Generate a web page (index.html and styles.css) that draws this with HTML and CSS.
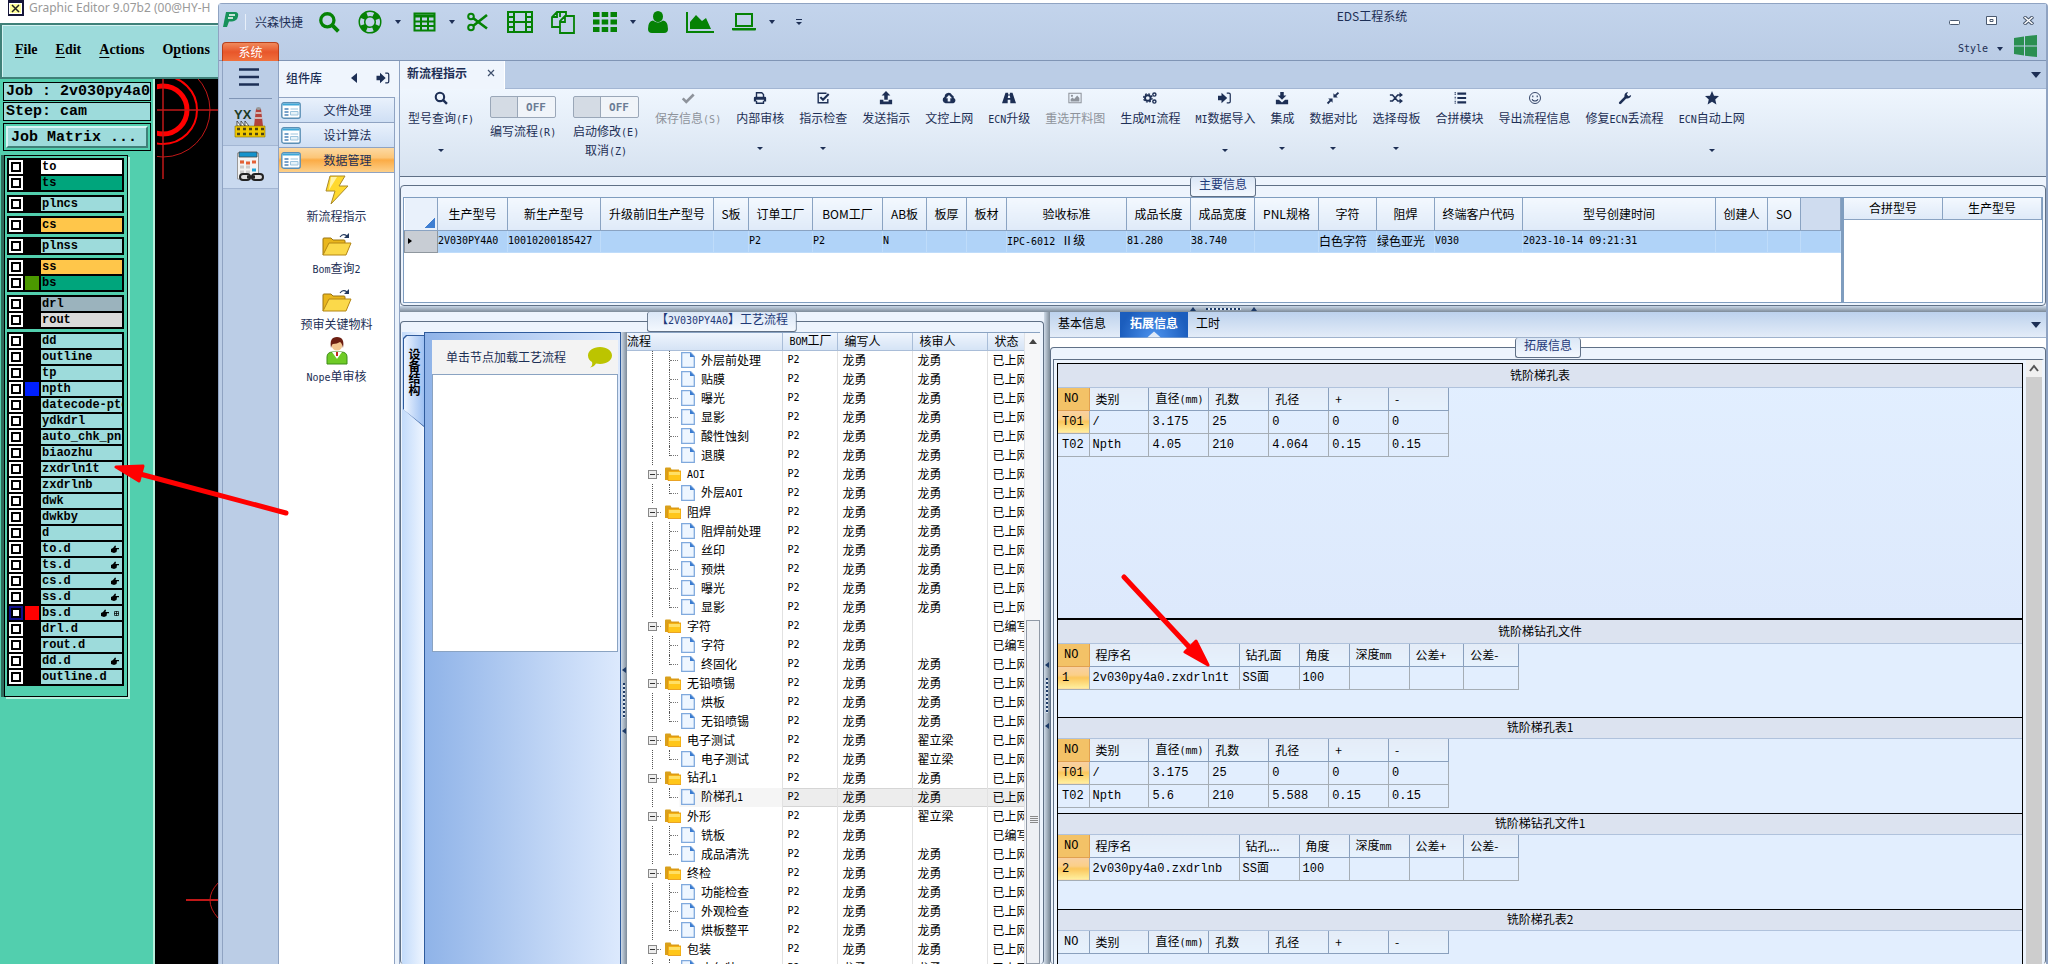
FILE: index.html
```html
<!DOCTYPE html>
<html lang="zh-CN">

<head>
	<meta charset="UTF-8" />
	<meta name="viewport" content="width=device-width, initial-scale=1.0" />
	<title>EDS工程系统</title>
	<link rel="stylesheet" href="styles.css">
	<script src="script.js" defer></script>
</head>

<body>
	<svg class="sprite" aria-hidden="true">
		<symbol id="i-search" viewBox="0 0 16 16"><circle cx="6.8" cy="6.8" r="4.8" fill="none" stroke="currentColor" stroke-width="2.4" /><path d="M10.5 10.5l4.3 4.3" stroke="currentColor" stroke-width="2.8" /></symbol>
		<symbol id="i-check" viewBox="0 0 16 16"><path d="M2 8.5l4 4L14.5 4" fill="none" stroke="currentColor" stroke-width="3" /></symbol>
		<symbol id="i-print" viewBox="0 0 16 16"><path d="M4 7V2h6l2 2v3M4 11v3h8v-3" fill="none" stroke="currentColor" stroke-width="1.6" /><path d="M1 12V8q0-1.500 1.500-1.500h11Q15 6.500 15 8v4h-2.500v-2h-9v2z" fill="currentColor" /></symbol>
		<symbol id="i-checkbox" viewBox="0 0 16 16"><path d="M13.500 9v4.500h-11v-11H12" fill="none" stroke="currentColor" stroke-width="1.600" /><path d="M5 7l3 3 6.500-6.500" fill="none" stroke="currentColor" stroke-width="2.400" /></symbol>
		<symbol id="i-upload" viewBox="0 0 16 16"><path d="M8 0l5 5h-3v5H6V5H3zM1 10h4v2h6v-2h4v5H1z" fill="currentColor" /></symbol>
		<symbol id="i-cloud" viewBox="0 0 16 16"><path fill-rule="evenodd" d="M4 14a4 4 0 0 1-1-7.500 4.500 4.500 0 0 1 8.500-2A3 3 0 0 1 13.500 8 3.200 3.200 0 0 1 13 14zM8 4.500L4.500 8.300h2V12h3V8.300h2z" fill="currentColor" /></symbol>
		<symbol id="i-road" viewBox="0 0 16 16"><path fill-rule="evenodd" d="M4 2h3v2h2V2h3l4 12H9.500v-4h-3v4H0zM7 5l-.4 3h2.800L9 5z" fill="currentColor" /></symbol>
		<symbol id="i-image" viewBox="0 0 16 16"><path d="M1 2.500h14v11H1z" fill="none" stroke="currentColor" stroke-width="1.200" /><path d="M3 12V9.500l2-2 2 1.500 3.500-4L13 8v4z" fill="currentColor" /><circle cx="4.500" cy="5.500" r="1.300" fill="currentColor" /></symbol>
		<symbol id="i-cogs" viewBox="0 0 16 16"><circle cx="5.500" cy="8" r="3.200" fill="none" stroke="currentColor" stroke-width="2.200" /><circle cx="5.500" cy="8" r="4.800" fill="none" stroke="currentColor" stroke-width="1.500" stroke-dasharray="2 1.770" /><circle cx="13" cy="4" r="1.800" fill="none" stroke="currentColor" stroke-width="1.600" /><circle cx="13" cy="12" r="1.800" fill="none" stroke="currentColor" stroke-width="1.600" /></symbol>
		<symbol id="i-signin" viewBox="0 0 16 16"><path d="M0 5.500h4V2l6.500 6L4 14v-3.500H0z" fill="currentColor" /><path d="M10 2.500h2.500q1.500 0 1.500 1.500v8q0 1.500-1.500 1.500H10" fill="none" stroke="currentColor" stroke-width="1.400" /></symbol>
		<symbol id="i-download" viewBox="0 0 16 16"><path d="M6 1h4v4h3l-5 5-5-5h3zM1 10h3.500L8 13l3.500-3H15v5H1z" fill="currentColor" /></symbol>
		<symbol id="i-compress" viewBox="0 0 16 16"><path d="M8.500 2.500v5h5l-1.700-1.700L15 2.500 13.500 1l-3.300 3.200zM2.500 8.500h5v5l-1.700-1.700L2.500 15 1 13.500l3.200-3.300z" fill="currentColor" /></symbol>
		<symbol id="i-random" viewBox="0 0 16 16"><path d="M1 4.500h3l6 7h3M1 11.500h3l6-7h3" fill="none" stroke="currentColor" stroke-width="1.800" /><path d="M12 1.500l4 3-4 3zM12 8.500l4 3-4 3z" fill="currentColor" /></symbol>
		<symbol id="i-list" viewBox="0 0 16 16"><path d="M5 3h10M5 8h10M5 13h10" stroke="currentColor" stroke-width="2.400" /><path d="M2.500 1v4M2.500 6.500v3M2.500 11v4" stroke="currentColor" stroke-width="1.200" stroke-dasharray="1.500 .6" /></symbol>
		<symbol id="i-smile" viewBox="0 0 16 16"><circle cx="8" cy="8" r="6.300" fill="none" stroke="currentColor" /><path d="M4.500 9.500q3.500 4 7 0M5.500 5v2M10.500 5v2" fill="none" stroke="currentColor" stroke-width="1.200" /></symbol>
		<symbol id="i-wrench" viewBox="0 0 16 16"><path d="M2.500 13.500l7-7" stroke="currentColor" stroke-width="3" stroke-linecap="round" /><path d="M15 4.500L12 6 10 4l1.500-3a4.300 4.300 0 0 0-4 5.500l2 2A4.300 4.300 0 0 0 15 4.500z" fill="currentColor" /></symbol>
		<symbol id="i-star" viewBox="0 0 16 16"><path d="M8 0l2.300 5.300 5.700.5-4.300 3.800 1.300 5.900L8 12.400l-5 3.100 1.300-5.900L0 5.800l5.700-.5z" fill="currentColor" /></symbol>
		<symbol id="i-form" viewBox="0 0 20 17"><rect x=".8" y=".8" width="18.400" height="15.400" rx="2" fill="#fff" stroke="#5b8fb5" stroke-width="1.400" /><path d="M1.500 2.500h17" stroke="#3da7d8" stroke-width="2" /><path d="M3.500 7h4M3.500 10h4M3.500 13h4" stroke="#4b83b8" stroke-width="1.500" /><path d="M9.500 7h7.500M9.500 9.500h7.500v3.500H9.500z" stroke="#9cc4de" fill="#e6f2f8" /></symbol>
		<symbol id="i-folder" viewBox="0 0 30 24"><path d="M1 22V6q0-1 1-1h7l2 2h11q1 0 1 1v3" fill="#e9b61c" stroke="#9b7410" /><path d="M1 22L7 10h22l-5 12z" fill="#fbd94a" stroke="#b48614" /><path d="M18 4q3-4 7-1" fill="none" stroke="#22385e" stroke-width="1.200" /><path d="M27 0v5h-5z" fill="#22385e" /></symbol>
		<symbol id="i-dir" viewBox="0 0 16 14"><path d="M0 13V1.500Q0 .5 1 .5h4.500l1 2H14V13z" fill="#d9a01b" /><path d="M3 4h13v9.500H3z" fill="#ffc61a" stroke="#e3930b" stroke-width=".8" /><path d="M4 5h11v3H4z" fill="#ffe066" /></symbol>
		<symbol id="i-file" viewBox="0 0 14 16"><path d="M.7.700h9L13.300 4.500v10.800H.7z" fill="#eef6ff" stroke="#7fa9dd" stroke-width="1.300" /><path d="M9 .5L13.500 5H9z" fill="#3a7bd0" /></symbol>
		<symbol id="i-hand" viewBox="0 0 8 8"><path d="M0 4l2-1 2-2.500 1 .5L4.500 3H8v1.300H6L5.500 7 3 8 0 7z" fill="#000" /></symbol>
		<symbol id="i-grid" viewBox="0 0 5 5"><path d="M.5.500h4v4h-4zM2.500 0v5M0 2.500h5" fill="none" stroke="#000" stroke-width=".7" /></symbol>
	</svg>

	<section class="editor">
		<header class="editor-title">
			<svg width="16" height="16" viewBox="0 0 16 16"><path d="M0 0h16v16H0z" fill="#16163a" /><path d="M1 3h13v11H1z" fill="#fff" /><path d="M2 4h11v9H2z" fill="#ffff9c" /><path d="M4 5l7 7M11 5l-7 7" stroke="#222" stroke-width="1.500" /></svg>
			<span>Graphic Editor 9.07b2 (00@HY-H</span>
		</header>
		<nav class="editor-menu">
			<a href="#"><u>F</u>ile</a>
			<a href="#"><u>E</u>dit</a>
			<a href="#"><u>A</u>ctions</a>
			<a href="#">O<u>p</u>tions</a>
		</nav>
		<div class="editor-body">
			<div class="editor-side">
				<div class="job">
					<div class="job-line">Job : 2v030py4a0</div>
					<div class="job-line">Step: cam</div>
					<div class="job-box"><button type="button">Job Matrix ...</button></div>
				</div>
				<div class="layers" id="layers"></div>
			</div>
			<svg class="canvas" width="61" height="885" viewBox="0 0 61 885">
				<g fill="none" stroke="#f00">
					<circle cx="6" cy="31" r="24" stroke-width="5" />
					<circle cx="6" cy="31" r="34" stroke-width="2" />
					<circle cx="6" cy="31" r="47" stroke="#c01818" />
					<path d="M6 0v100M0 31h61" stroke="#c01818" stroke-width="1.500" />
					<path d="M61 804q-16 17 0 35" stroke="#c01818" />
					<path d="M29 821h32" stroke="#c01818" stroke-width="2" />
				</g>
			</svg>
		</div>
	</section>

	<main class="eds">
		<header class="titlebar">
			<div class="quick">
				<svg class="brand" width="16" height="17" viewBox="0 0 16 17"><path d="M3 1h9q4 0 3 4.500T9 10.500H6L4 16H0z" fill="#16915a" /><path d="M6 4h6M5 7h5" stroke="#fff" stroke-width="1.500" /></svg>
				<span class="company">兴森快捷</span>
				<button type="button" aria-label="查询"><svg width="22" height="22"><use href="#i-search" /></svg></button>
				<button type="button" class="drop" aria-label="帮助"><svg width="24" height="24" viewBox="0 0 24 24"><circle cx="12" cy="12" r="8" fill="none" stroke="currentColor" stroke-width="7" /><circle cx="12" cy="12" r="8" fill="none" stroke="#bfd0e8" stroke-width="4" stroke-dasharray="6.300 6.260" stroke-dashoffset="3.100" /></svg></button>
				<button type="button" class="drop" aria-label="表格"><svg width="23" height="20" viewBox="0 0 23 20"><path d="M1.500 1.500h20v17h-20z" fill="none" stroke="currentColor" stroke-width="2" /><path d="M1 4h21" stroke="currentColor" stroke-width="3" /><path d="M1 9.500h21M1 14h21M8 3v16M15 3v16" stroke="currentColor" stroke-width="2" /></svg></button>
				<button type="button" aria-label="剪切"><svg width="22" height="22" viewBox="0 0 22 20"><circle cx="4" cy="4.500" r="2.800" fill="none" stroke="currentColor" stroke-width="2" /><circle cx="4" cy="15.500" r="2.800" fill="none" stroke="currentColor" stroke-width="2" /><path d="M6 6l14 10.500M6 14L20 3" stroke="currentColor" stroke-width="2.600" /></svg></button>
				<button type="button" aria-label="胶片"><svg width="26" height="22" viewBox="0 0 26 22"><path d="M1 1h24v20H1zM7 1v20M19 1v20M7 11h12M1 6h6M1 11h6M1 16h6M19 6h6M19 11h6M19 16h6" fill="none" stroke="currentColor" stroke-width="2" /></svg></button>
				<button type="button" aria-label="复制"><svg width="24" height="23" viewBox="0 0 24 23"><path d="M9 6V1H6L1 6v10h8M1 6h5V1M23 5h-9l-5 5v12h14zM9 11h5V5M15 5V1H9" fill="none" stroke="currentColor" stroke-width="1.800" /></svg></button>
				<button type="button" class="drop" aria-label="模块"><svg width="24" height="20" viewBox="0 0 24 20"><path d="M0 0h6.500v5H0zM8.700 0h6.500v5H8.700zM17.500 0H24v5h-6.500zM0 7.500h6.500v5H0zM8.700 7.500h6.500v5H8.700zM17.500 7.500H24v5h-6.500zM0 15h6.500v5H0zM8.700 15h6.500v5H8.700zM17.500 15H24v5h-6.500z" fill="currentColor" /></svg></button>
				<button type="button" aria-label="用户"><svg width="20" height="22" viewBox="0 0 20 22"><ellipse cx="10" cy="5.500" rx="5" ry="5.500" fill="currentColor" /><path d="M5 9.500Q0 10 0 18q0 4 4 4h12q4 0 4-4 0-8-5-8.500-5 4-10 0z" fill="currentColor" /></svg></button>
				<button type="button" aria-label="图表"><svg width="28" height="21" viewBox="0 0 28 21"><path d="M1 0v20h27" fill="none" stroke="currentColor" stroke-width="2" /><path d="M4 17v-7l6-7 6 6 4-3 5 11z" fill="currentColor" /></svg></button>
				<button type="button" class="drop" aria-label="电脑"><svg width="24" height="18" viewBox="0 0 24 18"><path d="M4 1h16v12H4z" fill="none" stroke="currentColor" stroke-width="2" /><path d="M0 15h24v1.500q0 1-1 1H1q-1 0-1-1z" fill="currentColor" /></svg></button>
				<span class="overflow"></span>
			</div>
			<h1>EDS工程系统</h1>
			<div class="controls">
				<div class="window-buttons">
					<button type="button" aria-label="最小化"><svg width="11" height="9" viewBox="0 0 11 9"><rect x=".5" y="4.500" width="10" height="4" rx="1" fill="#fff" stroke="#4b5a70" /></svg></button>
					<button type="button" aria-label="还原"><svg width="11" height="9" viewBox="0 0 11 9"><path d="M.5.500h10v8H.5z" fill="#fff" stroke="#4b5a70" /><path d="M4 3.500h3v2H4z" fill="none" stroke="#4b5a70" /></svg></button>
					<button type="button" aria-label="关闭"><svg width="11" height="9" viewBox="0 0 11 9"><path d="M1 .5l9 8M10 .5l-9 8" stroke="#4b5a70" stroke-width="3.500" /><path d="M1.500 1l8 7M9.500 1l-8 7" stroke="#fff" stroke-width="1.500" /></svg></button>
				</div>
				<div class="style-row">
					<button type="button" class="drop style-button en">Style</button>
					<svg width="23" height="22" viewBox="0 0 23 22"><path d="M0 3l10-1.600V10.500H0zM11 1.200L23 0v10.500H11zM0 11.500h10v9L0 19zM11 11.500h12V22l-12-1.300z" fill="#2b8f51" /></svg>
				</div>
			</div>
			<a class="system-tab" href="#">系统</a>
		</header>

		<div class="workspace">
			<aside class="rail">
				<button type="button" class="burger" aria-label="菜单"><svg width="20" height="18" viewBox="0 0 20 18"><path d="M0 1.500h20M0 9h20M0 16.500h20" stroke="#1d2f55" stroke-width="2.400" /></svg></button>
				<hr>
				<button type="button" class="rail-item" aria-label="YX"><svg width="32" height="32" viewBox="0 0 32 32"><text x="0" y="13" class="yx">YX</text><path d="M20 20L22 3h5l2 17z" fill="#b3423c" /><path d="M21.600 7h6M21 12h7" stroke="#ddd" stroke-width="1.500" /><ellipse cx="24.500" cy="2.500" rx="2.500" ry="1.500" fill="#999" /><path d="M3 20v-5l4 5v-5l4 5v-5l4 5z" fill="#fff" stroke="#333" stroke-width=".8" /><path d="M1 20h30v11H1z" fill="#f0c800" stroke="#8a7400" stroke-width=".6" /><path d="M3 23h27M3 28h27" stroke="#4d4413" stroke-width="2.500" stroke-dasharray="3 3" /></svg></button>
				<button type="button" class="rail-item active" aria-label="计算"><svg width="30" height="32" viewBox="0 0 30 32"><path d="M2.500 2h21v26h-21z" fill="#f3f3f3" stroke="#999" /><path d="M4 1h18v5H4z" fill="#1593cc" stroke="#444" stroke-width=".8" /><path d="M5 11h4M5 16h4M5 21h4M11 16h4M11 21h4" stroke="#ccc" stroke-width="3" /><path d="M5 11h4M17 11h4M11 12h4" stroke="#e46136" stroke-width="3" /><path d="M17 19h4" stroke="#1fa5d8" stroke-width="3" /><rect x="5" y="23" width="10" height="6" rx="3" fill="#ddd" stroke="#222" stroke-width="2" /><rect x="17" y="23" width="11" height="6" rx="3" fill="#ddd" stroke="#222" stroke-width="2" /><path d="M12 26h8" stroke="#222" stroke-width="3" /></svg></button>
			</aside>

			<aside class="library">
				<header>
					<strong>组件库</strong>
					<button type="button" aria-label="收起"><svg width="6" height="10" viewBox="0 0 6 10"><path d="M6 0v10L0 5z" fill="#1d2f55" /></svg></button>
					<button type="button" aria-label="固定"><svg width="15" height="14"><use href="#i-signin" /></svg></button>
				</header>
				<div class="library-body">
					<button type="button" class="category"><svg width="20" height="17"><use href="#i-form" /></svg><span>文件处理</span></button>
					<button type="button" class="category"><svg width="20" height="17"><use href="#i-form" /></svg><span>设计算法</span></button>
					<button type="button" class="category current"><svg width="20" height="17"><use href="#i-form" /></svg><span>数据管理</span></button>
					<div class="shortcuts">
						<a href="#"><svg width="24" height="30" viewBox="0 0 24 30"><path d="M5 1h15l-6 10h9L6 29l4-13H1z" fill="#ffd92e" stroke="#a98a2c" /><path d="M6 2h6L4 15z" fill="#fff3a6" /></svg><span>新流程指示</span></a>
						<a href="#"><svg width="30" height="24"><use href="#i-folder" /></svg><span><span class="en">Bom</span>查询<span class="en">2</span></span></a>
						<a href="#"><svg width="30" height="24"><use href="#i-folder" /></svg><span>预审关键物料</span></a>
						<a href="#"><svg width="22" height="28" viewBox="0 0 22 28"><path d="M1 27V20q0-5 6-5h8q6 0 6 5v7z" fill="#6fcb26" stroke="#3c8d16" /><path d="M6 15l5 7 5-7z" fill="#fff" /><circle cx="11" cy="8" r="5.500" fill="#f3c690" /><path d="M5 11Q3 0 11 0t6 11q-1-5-3-6-3 2-7 2-1 0-2 4z" fill="#6d1f12" /><path d="M11 15v4" stroke="#c2271c" stroke-width="2" /></svg><span><span class="en">Nope</span>单审核</span></a>
					</div>
				</div>
			</aside>

			<div class="document">
				<div class="doc-tabs">
					<div class="doc-tab"><strong>新流程指示</strong><button type="button" aria-label="关闭标签"><svg width="8" height="8" viewBox="0 0 8 8"><path d="M1 1l6 6M7 1L1 7" stroke="#3e4f6c" stroke-width="1.200" /></svg></button></div>
					<span class="caret big"></span>
				</div>

				<div class="toolbar">
					<button type="button" class="tool more"><svg><use href="#i-search" /></svg><span>型号查询<span class="en">(F)</span></span></button>
					<label class="toggle"><input type="checkbox"><span class="en">OFF</span><span>编写流程<span class="en">(R)</span></span></label>
					<label class="toggle"><input type="checkbox"><span class="en">OFF</span><span>启动修改<span class="en">(E)</span><br>取消<span class="en">(Z)</span></span></label>
					<button type="button" class="tool" disabled><svg><use href="#i-check" /></svg><span>保存信息<span class="en">(S)</span></span></button>
					<button type="button" class="tool more"><svg><use href="#i-print" /></svg><span>内部审核</span></button>
					<button type="button" class="tool more"><svg><use href="#i-checkbox" /></svg><span>指示检查</span></button>
					<button type="button" class="tool"><svg><use href="#i-upload" /></svg><span>发送指示</span></button>
					<button type="button" class="tool"><svg><use href="#i-cloud" /></svg><span>文控上网</span></button>
					<button type="button" class="tool"><svg><use href="#i-road" /></svg><span><span class="en">ECN</span>升级</span></button>
					<button type="button" class="tool" disabled><svg><use href="#i-image" /></svg><span>重选开料图</span></button>
					<button type="button" class="tool"><svg><use href="#i-cogs" /></svg><span>生成<span class="en">MI</span>流程</span></button>
					<button type="button" class="tool more"><svg><use href="#i-signin" /></svg><span><span class="en">MI</span>数据导入</span></button>
					<button type="button" class="tool more"><svg><use href="#i-download" /></svg><span>集成</span></button>
					<button type="button" class="tool more"><svg><use href="#i-compress" /></svg><span>数据对比</span></button>
					<button type="button" class="tool more"><svg><use href="#i-random" /></svg><span>选择母板</span></button>
					<button type="button" class="tool"><svg><use href="#i-list" /></svg><span>合拼模块</span></button>
					<button type="button" class="tool"><svg><use href="#i-smile" /></svg><span>导出流程信息</span></button>
					<button type="button" class="tool"><svg><use href="#i-wrench" /></svg><span>修复<span class="en">ECN</span>丢流程</span></button>
					<button type="button" class="tool more"><svg><use href="#i-star" /></svg><span><span class="en">ECN</span>自动上网</span></button>
				</div>

				<section class="group main-info">
					<h2>主要信息</h2>
					<div class="group-body">
						<div class="grid-scroll">
							<table class="main-grid">
								<colgroup><col class="w33"><col class="w70"><col class="w93"><col class="w113"><col class="w35"><col class="w64"><col class="w70"><col class="w44"><col class="w40"><col class="w40"><col class="w120"><col class="w64"><col class="w64"><col class="w64"><col class="w58"><col class="w58"><col class="w88"><col class="w193"><col class="w52"><col class="w33"><col></colgroup>
								<thead>
									<tr><th class="corner"></th><th>生产型号</th><th>新生产型号</th><th>升级前旧生产型号</th><th>S板</th><th>订单工厂</th><th>BOM工厂</th><th>AB板</th><th>板厚</th><th>板材</th><th>验收标准</th><th>成品长度</th><th>成品宽度</th><th>PNL规格</th><th>字符</th><th>阻焊</th><th>终端客户代码</th><th>型号创建时间</th><th>创建人</th><th>SO</th><th class="rest"></th></tr>
								</thead>
								<tbody>
									<tr><td class="marker"></td><td class="en">2V030PY4A0</td><td class="en">10010200185427</td><td></td><td></td><td class="en">P2</td><td class="en">P2</td><td class="en">N</td><td></td><td></td><td><span class="en">IPC-6012 </span>Ⅱ级</td><td class="en">81.280</td><td class="en">38.740</td><td></td><td>白色字符</td><td>绿色亚光</td><td class="en">V030</td><td class="en">2023-10-14 09:21:31</td><td></td><td></td><td></td></tr>
								</tbody>
							</table>
						</div>
						<div class="grid-scroll side-grid">
							<table>
								<thead><tr><th>合拼型号</th><th>生产型号</th></tr></thead>
							</table>
						</div>
					</div>
				</section>

				<div class="splitter row"><i></i><b></b><i></i></div>

				<div class="lower">
					<section class="group flow">
						<h2>【<span class="en">2V030PY4A0</span>】工艺流程</h2>
						<div class="group-body">
							<div class="side-strip"><button type="button">设备结构</button></div>
							<div class="device">
								<div class="device-head"><span>单击节点加载工艺流程</span><svg width="24" height="21" viewBox="0 0 24 21"><path d="M12 0c7 0 12 4 12 8.500S19 17 12 17q-2 0-4-.4Q6 20 2 20.500q3-2 2-5.500-4-2.500-4-6.500C0 4 5 0 12 0z" fill="#bcc400" /></svg></div>
								<div class="device-body"></div>
							</div>
							<div class="splitter col"><i></i><b></b><i></i></div>
							<div class="tree-wrap">
								<table class="tree">
									<thead><tr><th>流程</th><th><span class="en">BOM</span>工厂</th><th>编写人</th><th>核审人</th><th>状态</th></tr></thead>
									<tbody id="tree"></tbody>
								</table>
								<div class="tree-scroll"><span class="up"></span><span class="thumb"></span></div>
							</div>
						</div>
					</section>

					<div class="splitter col"><i></i><b></b><i></i></div>

					<section class="extra">
						<nav class="tabs">
							<a href="#">基本信息</a><a href="#" class="on">拓展信息</a><a href="#">工时</a>
							<span class="caret big"></span>
						</nav>
						<div class="group expand">
							<h2>拓展信息</h2>
							<div class="group-body">
								<div class="sheets">
									<section class="sheet tall">
										<h3>铣阶梯孔表</h3>
										<table class="holes">
											<thead><tr><th class="hot">NO</th><th>类别</th><th>直径<span class="en">(mm)</span></th><th>孔数</th><th>孔径</th><th>+</th><th>-</th></tr></thead>
											<tbody>
												<tr class="sel"><td>T01</td><td>/</td><td>3.175</td><td>25</td><td>0</td><td>0</td><td>0</td></tr>
												<tr><td>T02</td><td>Npth</td><td>4.05</td><td>210</td><td>4.064</td><td>0.15</td><td>0.15</td></tr>
											</tbody>
										</table>
									</section>
									<section class="sheet roomy">
										<h3>铣阶梯钻孔文件</h3>
										<table class="files">
											<thead><tr><th class="hot">NO</th><th>程序名</th><th>钻孔面</th><th>角度</th><th>深度<span class="en">mm</span></th><th>公差+</th><th>公差-</th></tr></thead>
											<tbody><tr class="sel"><td>1</td><td>2v030py4a0.zxdrln1t</td><td>SS面</td><td>100</td><td></td><td></td><td></td></tr></tbody>
										</table>
									</section>
									<section class="sheet">
										<h3>铣阶梯孔表1</h3>
										<table class="holes">
											<thead><tr><th class="hot">NO</th><th>类别</th><th>直径<span class="en">(mm)</span></th><th>孔数</th><th>孔径</th><th>+</th><th>-</th></tr></thead>
											<tbody>
												<tr class="sel"><td>T01</td><td>/</td><td>3.175</td><td>25</td><td>0</td><td>0</td><td>0</td></tr>
												<tr><td>T02</td><td>Npth</td><td>5.6</td><td>210</td><td>5.588</td><td>0.15</td><td>0.15</td></tr>
											</tbody>
										</table>
									</section>
									<section class="sheet">
										<h3>铣阶梯钻孔文件1</h3>
										<table class="files">
											<thead><tr><th class="hot">NO</th><th>程序名</th><th>钻孔...</th><th>角度</th><th>深度<span class="en">mm</span></th><th>公差+</th><th>公差-</th></tr></thead>
											<tbody><tr class="sel"><td>2</td><td>2v030py4a0.zxdrlnb</td><td>SS面</td><td>100</td><td></td><td></td><td></td></tr></tbody>
										</table>
									</section>
									<section class="sheet">
										<h3>铣阶梯孔表2</h3>
										<table class="holes">
											<thead><tr><th>NO</th><th>类别</th><th>直径<span class="en">(mm)</span></th><th>孔数</th><th>孔径</th><th>+</th><th>-</th></tr></thead>
										</table>
									</section>
								</div>
								<div class="sheet-scroll"><svg width="16" height="17" viewBox="0 0 16 17"><path d="M4 11l4-5 4 5" fill="none" stroke="#555" stroke-width="2" /></svg></div>
							</div>
						</div>
					</section>
				</div>
			</div>
		</div>
	</main>

	<svg class="notes" width="1230" height="690" viewBox="0 0 1230 690" aria-hidden="true">
		<g fill="#f00" stroke="#f00" stroke-linejoin="round" stroke-linecap="round">
			<path d="M286 513L140 474M1124 577L1192 650" stroke-width="5" />
			<path d="M116 467l27-1-4 15zM1208 665l-23-13 11-11z" stroke-width="3" />
		</g>
	</svg>
</body>

</html>
```
FILE: styles.css
```css
* {
	box-sizing: border-box;
}

body {
	margin: 0;
	height: 100vh;
	overflow: hidden;
	display: flex;
	background: #fff;
	color: #1d2f55;
	font: 12px/16px "Noto Sans CJK SC", sans-serif;
}

button {
	border: 0;
	padding: 0;
	background: none;
	font: inherit;
	color: inherit;
}

a {
	color: inherit;
	text-decoration: none;
}

svg {
	display: block;
	flex: none;
}

h1, h2, h3 {
	margin: 0;
	font: inherit;
}

table {
	border-collapse: collapse;
	table-layout: fixed;
}

th, td {
	padding: 0;
	font-weight: normal;
	overflow: hidden;
	white-space: nowrap;
}

.sprite {
	position: absolute;
	width: 0;
	height: 0;
}

.en {
	font-family: "DejaVu Sans Mono", monospace;
	font-size: 10px;
}

.caret,
.drop::after {
	content: "";
	border: 3px solid transparent;
	border-top: 4px solid #1d2f55;
	border-bottom: 0;
}

.caret.big {
	border-width: 6px 5px 0;
	margin: 0 5px 0 auto;
}

/* graphic editor, left window */

.editor {
	width: 218px;
	flex: none;
	display: flex;
	flex-direction: column;
	overflow: hidden;
	color: #000;
}

.editor-title {
	height: 23px;
	padding-left: 8px;
	display: flex;
	gap: 5px;
	color: #999;
	font: 12px/16px "Noto Sans", sans-serif;
	white-space: nowrap;
}

.editor-menu {
	height: 56px;
	display: flex;
	align-items: center;
	gap: 18px;
	padding: 0 0 2px 13px;
	background: #9ddbdb;
	border: 2px solid #3f8078;
	border-right: 0;
	box-shadow: inset 1px 1px #d5f3f3;
	font: bold 14px/20px "Liberation Serif", serif;
}

.editor-menu u {
	text-underline-offset: 3px;
}

.editor-body {
	flex: 1;
	display: flex;
	min-height: 0;
	background: #000;
}

.editor-side {
	width: 155px;
	padding: 3px 2px 0 0;
	border-right: 2px solid #b5f0dc;
	background: #52cfae;
}

.canvas {
	margin-left: 2px;
}

.job {
	display: flex;
	flex-direction: column;
	gap: 1px;
	padding-left: 3px;
	font: bold 15px/17px "Liberation Mono", monospace;
}

.job-line {
	height: 19px;
	padding-left: 2px;
	border: 1px solid #000;
	background: #9ddbdb;
	white-space: nowrap;
}

.job-box {
	margin-top: 1px;
	height: 28px;
	border: 1px solid #000;
	padding: 2px;
}

.job-box button {
	width: 100%;
	height: 22px;
	padding-left: 3px;
	text-align: left;
	background: #9ddbdb;
	border: 2px solid;
	border-color: #d5f3f3 #3f8078 #3f8078 #d5f3f3;
}

.layers {
	display: flex;
	flex-direction: column;
	gap: 3px;
	width: 124px;
	height: 542px;
	margin: 4px 0 0 4px;
	padding: 2px;
	border: 1px solid #000;
	box-shadow: 2px 2px #b5f0dc, -3px 0 #2f6b5c;
}

.layer-group {
	display: flex;
	flex-direction: column;
	gap: 2px;
	margin-right: 1px;
	padding: 2px;
	background: #000;
}

.layer {
	display: grid;
	grid-template-columns: 14px 14px 1fr;
	gap: 2px;
	height: 14px;
	font: bold 12px/14px "Liberation Mono", monospace;
}

.layer input {
	appearance: none;
	margin: 0;
	border: 2px solid #fff;
	background: #fff;
	box-shadow: inset 0 0 0 2px #000;
}

.layer input:checked {
	border-color: #10108c;
}

.swatch.green {
	background: #4b9900;
}

.swatch.blue {
	background: #0020ff;
}

.swatch.red {
	background: #f00;
}

.layer label {
	display: flex;
	align-items: center;
	min-width: 0;
	overflow: hidden;
	padding-left: 1px;
	background: #9ddbdb;
	white-space: nowrap;
}

.layer label span {
	flex: 1;
}

.layer label svg {
	margin: 0 3px 0 2px;
}

.layer .white {
	background: #fff;
}

.layer .teal {
	background: #00a57c;
}

.layer .amber {
	background: #ffc64a;
}

.layer .slate {
	background: #9bb3bd;
}

.layer .silver {
	background: #dadada;
}

/* eds window */

.eds {
	flex: 1;
	min-width: 0;
	display: flex;
	flex-direction: column;
	margin-top: 3px;
	border: 1px solid #8fa3c2;
	border-width: 1px 2px 0 1px;
	border-radius: 4px 4px 0 0;
	background: #bbcde6;
}

.titlebar {
	position: relative;
	height: 57px;
	flex: none;
	display: grid;
	grid-template-columns: 7fr auto 4fr;
	background: linear-gradient(#c3d4ec, #bacce5);
	border-bottom: 1px solid #8095b5;
}

.quick {
	height: 36px;
	display: flex;
	align-items: center;
	gap: 18px;
	padding-left: 4px;
	color: #058205;
}

.brand {
	margin-bottom: 5px;
}

.company {
	margin: 0 -3px 0 -12px;
	padding-left: 9px;
	border-left: 1px solid #e8eff9;
	color: #1d2f55;
}

.quick .drop {
	display: flex;
	align-items: center;
	gap: 13px;
	margin-right: -6px;
}

.quick .overflow {
	width: 6px;
	height: 6px;
	margin-left: 9px;
	border-top: 1px solid #1d2f55;
	background: linear-gradient(#0000 2px, #1d2f55 2px);
	clip-path: polygon(0 0, 100% 0, 100% 50%, 50% 100%, 0 50%);
}

.titlebar h1 {
	padding-top: 4px;
}

.controls {
	display: flex;
	flex-direction: column;
	gap: 10px;
	align-items: flex-end;
	padding: 12px 9px 0 0;
}

.window-buttons {
	display: flex;
	gap: 26px;
	padding-right: 3px;
}

.style-row {
	display: flex;
	align-items: flex-end;
	gap: 11px;
}

.style-button {
	display: flex;
	align-items: center;
	gap: 9px;
}

.system-tab {
	position: absolute;
	left: 3px;
	bottom: -1px;
	width: 57px;
	height: 19px;
	line-height: 18px;
	text-align: center;
	color: #fff;
	border: 1px solid #b8401c;
	border-bottom: 0;
	border-radius: 4px 4px 0 0;
	background: linear-gradient(#f08a5c, #e8562a 50%, #f0703c);
}

.workspace {
	flex: 1;
	min-height: 0;
	display: flex;
	padding-left: 3px;
}

.rail {
	width: 57px;
	flex: none;
	border: 1px solid #8fa3c2;
	border-width: 0 1px;
	display: flex;
	flex-direction: column;
	align-items: center;
}

.burger {
	padding: 7px 4px 12px 0;
}

.rail hr {
	width: 43px;
	margin: 0;
	border: 0;
	border-top: 1px solid #8095b5;
}

.rail-item {
	width: 100%;
	height: 46px;
	padding-right: 2px;
	display: flex;
	align-items: center;
	justify-content: center;
}

.rail-item.active {
	height: 44px;
	background: #c9d9ef;
	border: 1px solid #a3b6d3;
	border-width: 1px 0;
}

.yx {
	font: bold 13px "Liberation Sans", sans-serif;
	fill: #1c3b24;
}

.library {
	width: 121px;
	flex: none;
	display: flex;
	flex-direction: column;
	background: #e9f1fb;
	border-right: 1px solid #8fa3c2;
}

.library header {
	height: 36px;
	display: flex;
	align-items: center;
	gap: 19px;
	padding: 0 8px 2px 7px;
	background: #eff5fd;
}

.library header strong {
	flex: 1;
	font-weight: 500;
}

.library-body {
	flex: 1;
	margin-right: 4px;
	background: #fff;
	border: 1px solid #8fa3c2;
	border-width: 1px 1px 0 0;
}

.category {
	display: flex;
	align-items: center;
	width: 100%;
	height: 25px;
	padding-left: 2px;
	background: linear-gradient(#e9f1fc, #cfdff4);
	border-bottom: 1px solid #8fa3c2;
}

.category span {
	flex: 1;
	padding-left: 18px;
	padding-right: 18px;
}

.category.current {
	background: linear-gradient(#fcd9a3, #fcc678 40%, #fbab45 50%, #fdd08a);
}

.shortcuts a {
	height: 54px;
	display: flex;
	flex-direction: column;
	justify-content: flex-end;
	align-items: center;
	gap: 3px;
}

.shortcuts a:first-child {
	height: 51px;
}

.document {
	flex: 1;
	min-width: 0;
	display: flex;
	flex-direction: column;
}

.doc-tabs {
	height: 28px;
	flex: none;
	display: flex;
	align-items: center;
	border-bottom: 1px solid #a3b6d3;
}

.doc-tab {
	display: flex;
	align-items: center;
	gap: 20px;
	height: 28px;
	padding: 0 9px 3px 7px;
	background: #eff5fd;
	border-right: 1px solid #fff;
}

.toolbar {
	height: 88px;
	flex: none;
	display: flex;
	gap: 15px;
	padding: 2px 0 0 8px;
	background: linear-gradient(#eff6fe, #d6e2f0);
	border-bottom: 1px solid #5f7086;
	white-space: nowrap;
}

.tool {
	display: flex;
	flex-direction: column;
	align-items: center;
	gap: 5px;
	height: 62px;
}

.tool svg {
	width: 14px;
	height: 14px;
}

.tool:disabled {
	color: #8e939b;
}

.more::after {
	content: "";
	margin-top: 16px;
	border: 3px solid transparent;
	border-top: 3px solid #1d2f55;
	border-bottom: 0;
}

.toggle {
	position: relative;
	width: 66px;
	margin: 5px 1px 0;
	text-align: center;
	line-height: 17px;
}

.toggle input {
	appearance: none;
	display: block;
	width: 66px;
	height: 22px;
	margin: 0 0 4px;
	border: 1px solid #9aa7b8;
	border-radius: 2px;
	background: linear-gradient(90deg, #d4dbe4 26px, #9aa7b8 26px 27px, #f0f4f9 27px);
}

/* caption lies over the switch track */
.toggle input + .en {
	position: absolute;
	top: 3px;
	left: 36px;
	font-weight: bold;
	font-size: 11px;
	color: #6b7c94;
}

.group {
	position: relative;
	padding-top: 8px;
	background: #edf4fd;
}

.group h2 {
	position: absolute;
	z-index: 1;
	top: 0;
	left: 50%;
	transform: translateX(-50%);
	height: 20px;
	padding: 0 8px;
	line-height: 13px;
	border: 1px solid #5f7086;
	border-top: 0;
	border-radius: 3px;
	background: linear-gradient(#dbe7f6, #f3f8fe);
	color: #1f3a78;
	white-space: nowrap;
}

.group-body {
	display: flex;
	height: 100%;
	border: 1px solid #5f7086;
	border-radius: 4px;
}

.main-info {
	height: 129px;
	flex: none;
}

.main-info .group-body {
	padding: 11px 2px 2px;
}

.grid-scroll {
	flex: 1;
	min-width: 0;
	background: #fff;
	border: 1px solid #7f9dbf;
	color: #000;
}

.side-grid {
	flex: 0 0 201px;
	border-left-width: 2px;
}

.grid-scroll table {
	width: 100%;
}

.grid-scroll th {
	height: 32px;
	background: linear-gradient(#f3f8fe, #dfeaf8);
	border: 1px solid #8aa3c2;
	border-width: 0 1px 1px 0;
	text-align: center;
}

.side-grid th {
	height: 21px;
}

.main-grid td {
	height: 22px;
	background: #b0d3f8;
	border: 1px solid #bfdcfa;
	border-width: 0 1px 1px 0;
}

.main-grid .marker {
	background: #c8cdd4;
	border: 1px solid #8f979f;
}

.marker::before {
	content: "";
	display: block;
	width: 0;
	margin-left: 3px;
	border: 3px solid transparent;
	border-left: 4px solid #000;
	border-right: 0;
}

.main-grid .corner {
	background: linear-gradient(135deg, #0000 50%, #3f7fd2 50%) 20px 19px / 10px 11px no-repeat, #e9f1fb;
}

.main-grid .rest {
	background: #cfdcef;
}

.w33 { width: 33px; }
.w35 { width: 35px; }
.w40 { width: 40px; }
.w44 { width: 44px; }
.w52 { width: 52px; }
.w58 { width: 58px; }
.w64 { width: 64px; }
.w70 { width: 70px; }
.w88 { width: 88px; }
.w93 { width: 93px; }
.w113 { width: 113px; }
.w120 { width: 120px; }
.w193 { width: 193px; }

.splitter {
	flex: none;
	display: flex;
	align-items: center;
	justify-content: center;
	gap: 10px;
}

.splitter i {
	border: 3px solid transparent;
}

.splitter.row {
	height: 6px;
	background: linear-gradient(#c8d6e6, #7d8b99);
}

.splitter.row b {
	width: 35px;
	height: 2px;
	background: repeating-linear-gradient(90deg, #1d3a66 0 2px, #dfe8f2 2px 4px);
}

.splitter.row i {
	border-bottom: 4px solid #1d3a66;
	border-top: 0;
}

.splitter.col {
	width: 6px;
	flex-direction: column;
	padding-top: 114px;
	background: linear-gradient(90deg, #cfdbe8, #7d8b99);
}

.splitter.col b {
	width: 2px;
	height: 35px;
	background: repeating-linear-gradient(#1d3a66 0 2px, #dfe8f2 2px 4px);
}

.splitter.col i {
	border-right: 4px solid #1d3a66;
	border-left: 0;
}

.lower {
	flex: 1;
	min-height: 0;
	display: flex;
}

.flow {
	flex: 0 0 644px;
	padding-top: 9px;
}

.flow .group-body {
	padding: 10px 3px 0 1px;
	border-bottom: 0;
	overflow: hidden;
}

.flow .splitter.col {
	padding-top: 104px;
}

.side-strip {
	width: 22px;
	padding: 3px 0 0 1px;
	background: linear-gradient(90deg, #c3dbfa, #eef5ff);
}

.side-strip button {
	position: relative;
	z-index: 0;
	width: 21px;
	height: 92px;
	padding-top: 13px;
	display: flex;
	writing-mode: vertical-rl;
	line-height: 20px;
	font-weight: bold;
	color: #000;
}

.side-strip button::before,
.side-strip button::after {
	content: "";
	position: absolute;
	z-index: -1;
	inset: 0;
	background: #2f5b9c;
	clip-path: polygon(0 3px, 3px 0, 100% 0, 100% 100%, 0 74px);
}

.side-strip button::after {
	inset: 1px 0 1px 1px;
	background: linear-gradient(90deg, #eef5ff, #9dc0f2);
}

.device {
	width: 197px;
	padding: 7px 2px 0 7px;
	border: 1px solid #2f5b9c;
	border-bottom: 0;
	background: linear-gradient(90deg, #8fb3e8, #dce9fd);
}

.device-head {
	height: 34px;
	display: flex;
	align-items: center;
	justify-content: space-between;
	padding: 0 6px 0 14px;
	background: #f3f3f3;
}

.device-body {
	height: 278px;
	background: #fff;
	border: 1px solid #8aa3c2;
}

.tree-wrap {
	flex: 1;
	min-width: 0;
	display: flex;
	background: #fff;
	border-top: 1px solid #8aa3c2;
	color: #000;
}

.tree {
	flex: 1;
	width: 397px;
	height: min-content;
}

.tree th {
	height: 17px;
	padding-left: 7px;
	text-align: left;
	line-height: 14px;
	background: linear-gradient(#eff5fd, #d5e3f5);
	border: 1px solid #a9bdd8;
	border-width: 0 1px 1px 0;
}

.tree th:first-child {
	width: 155px;
	padding-left: 0;
}

.tree th:nth-child(2) {
	width: 55px;
}

.tree th:nth-child(3),
.tree th:nth-child(4) {
	width: 75px;
}

.tree td {
	height: 19px;
	padding-left: 5px;
	border-right: 1px solid #e2e2e2;
}

.tree td:last-child,
.tree th:last-child {
	border-right: 0;
}

.tree td:first-child {
	padding-left: 25px;
}

.tree .selected td {
	background: linear-gradient(#d5d5d5 1px, #ededed 1px 18px, #d5d5d5 18px);
}

.tree .selected td:first-child {
	background: linear-gradient(90deg, #fff 52px, #f5f5f5 53px);
}

.node {
	display: flex;
	align-items: center;
	height: 19px;
}

.node::before {
	content: "";
	width: 4px;
	border-top: 1px dotted #777;
	order: 1;
	margin-right: 4px;
}

.node .dir,
.node .file {
	order: 2;
	margin-right: 6px;
}

.node span {
	order: 3;
}

.node b {
	font-weight: normal;
}

.expander {
	width: 9px;
	height: 9px;
	margin-left: -4px;
	border: 1px solid #888;
	background: linear-gradient(#333, #333) center / 5px 1px no-repeat, #eee;
}

.branch {
	align-self: stretch;
	width: 17px;
	border-left: 1px dotted #555;
}

.twig {
	align-self: stretch;
	border-left: 1px dotted #555;
}

.last .twig {
	height: 10px;
	align-self: flex-start;
}

.leaf::before {
	width: 8px;
	margin-right: 3px;
}

.tree-scroll {
	width: 16px;
	display: flex;
	flex-direction: column;
	align-items: center;
	gap: 276px;
	background: #f6f7f9;
	border-left: 1px solid #dfe3e8;
}

.tree-scroll .up {
	margin-top: 6px;
	border: 4px solid transparent;
	border-bottom: 5px solid #444;
	border-top: 0;
}

.tree-scroll .thumb {
	flex: 1;
	width: 14px;
	border: 1px solid #9099a6;
	background: repeating-linear-gradient(#888 0 1px, #0000 1px 2px) 3px 195px / 8px 7px no-repeat, #eef0f4;
}

.extra {
	flex: 1;
	min-width: 0;
	display: flex;
	flex-direction: column;
}

.tabs {
	height: 26px;
	display: flex;
	align-items: center;
	flex: none;
	color: #000;
	background: linear-gradient(#bdd2ed, #e3ecf8);
	border-bottom: 1px solid #9fb2cc;
}

.tabs a {
	height: 26px;
	padding: 1px 8px;
	line-height: 20px;
}

.tabs a:first-child {
	padding-right: 14px;
}

.tabs .on {
	color: #fff;
	font-weight: bold;
	padding: 1px 10px;
	background: radial-gradient(circle at 50% 100%, #4d93ee, #1b5dbd 80%);
	clip-path: polygon(0 0, 100% 0, 100% 100%, 60% 100%, 50% 20px, 40% 100%, 0 100%);
}

.expand {
	flex: 1;
	min-height: 0;
	padding-top: 9px;
	background: #fff;
}

.expand .group-body {
	padding: 11px 1px 0 2px;
	background: #edf4fd;
	border-bottom: 0;
}

.sheets {
	flex: 1;
	min-width: 0;
	padding: 3px 3px 0 3px;
	background: #edf4fd;
	border: 1px solid #5f7086;
	border-width: 1px 0 0 1px;
	overflow: hidden;
	color: #000;
}

.sheet {
	height: 96px;
	border: 1px solid #000;
	border-bottom: 0;
	background: #e2eefe;
}

.sheet.tall {
	height: 255px;
	background: linear-gradient(#e2efff, #dde9fc);
}

.sheet.roomy {
	height: 99px;
	border-top-width: 2px;
}

.sheet h3 {
	height: 21px;
	line-height: 18px;
	text-align: center;
	background: #dce3f0;
	border-bottom: 1px solid #b0c2dc;
}

.sheet.tall h3,
.sheet.roomy h3 {
	height: 24px;
	line-height: 22px;
}

.sheet th {
	height: 22px;
	padding-left: 6px;
	text-align: left;
	background: linear-gradient(#e4ecf7, #e6f1fd);
	border: 1px solid #8aa0bd;
	border-width: 0 1px 1px 0;
}

.sheet td {
	height: 23px;
	padding-left: 3px;
	font-family: "Liberation Mono", "Noto Sans CJK SC", monospace;
	border: 1px solid #a5adb5;
	border-width: 0 1px 1px 0;
}

.holes {
	width: 391px;
}

.files {
	width: 461px;
}

.sheet th:first-child {
	width: 31px;
	font-family: "Liberation Mono", monospace;
}

.sheet td:first-child {
	padding-left: 4px;
}

.files th:nth-child(2) {
	width: 150px;
}

.files th:nth-child(3),
.files th:nth-child(5) {
	width: 60px;
}

.files th:nth-child(4) {
	width: 50px;
}

.sheet .hot {
	background: #f3c267;
	border-color: #e0a050;
}

.sheet .sel td:first-child {
	background: linear-gradient(#f8d0a4, #fbcf87 40%, #fbc55a 50%, #fff0a0);
}

.sheet-scroll {
	width: 18px;
	border-top: 1px solid #5f7086;
	background: linear-gradient(#f0f0f0 17px, #cdcdcd 17px);
	border-right: 2px solid #edf4fd;
}

/* red markup over both windows */
.notes {
	position: absolute;
	left: 0;
	top: 0;
	pointer-events: none;
}
```
FILE: script.js
```js
// name:row colour:swatch:marks
const layerGroups = [
	["to:white", "ts:teal"],
	["plncs"],
	["cs:amber"],
	["plnss"],
	["ss:amber", "bs:teal:green"],
	["drl:slate", "rout:silver"],
	["dd", "outline", "tp", "npth::blue", "datecode-ptd", "ydkdrl", "auto_chk_pnl", "biaozhu", "zxdrln1t", "zxdrlnb",
		"dwk", "dwkby", "d", "to.d:::hand", "ts.d:::hand", "cs.d:::hand", "ss.d:::hand", "bs.d::red:hand grid",
		"drl.d", "rout.d", "dd.d:::hand", "outline.d"],
];

const iconSize = { hand: 8, grid: 5 };

document.getElementById("layers").innerHTML = layerGroups.map((group) => `<div class="layer-group">${group.map((line) => {
	const [name, color = "", swatch = "", marks = ""] = line.split(":");
	const icons = marks.split(" ").filter(Boolean)
		.map((mark) => `<svg width="${iconSize[mark]}" height="${iconSize[mark]}"><use href="#i-${mark}" /></svg>`).join("");
	return `<div class="layer">
		<input type="checkbox" id="layer-${name}" ${name === "bs.d" ? "checked" : ""}>
		<i class="swatch ${swatch}"></i>
		<label for="layer-${name}" class="${color}"><span>${name}</span>${icons}</label>
	</div>`;
}).join("")}</div>`).join("");

// "+" marks a folder, then name | author | reviewer | state
const steps = `外层前处理
贴膜
曝光
显影
酸性蚀刻
退膜
+AOI
外层AOI
+阻焊
阻焊前处理
丝印
预烘
曝光
显影
+字符||-|已编写
字符||-|已编写
终固化
+无铅喷锡
烘板
无铅喷锡
+电子测试||翟立梁
电子测试||翟立梁
+钻孔1
阶梯孔1
+外形||翟立梁
铣板||-|已编写
成品清洗
+终检
功能检查
外观检查
烘板整平
+包装
内包装`.split("\n");

document.getElementById("tree").innerHTML = steps.map((line, i) => {
	const [raw, author, reviewer, state] = line.split("|");
	const folder = raw.startsWith("+");
	const name = raw.replace("+", "").replace(/[A-Z0-9]+/g, '<b class="en">$&</b>');
	const last = !steps[i + 1] || steps[i + 1].startsWith("+");
	const node = folder
		? `<div class="node"><i class="expander"></i><svg class="dir" width="16" height="14"><use href="#i-dir" /></svg><span>${name}</span></div>`
		: `<div class="node leaf"><i class="branch"></i><i class="twig"></i><svg class="file" width="14" height="16"><use href="#i-file" /></svg><span>${name}</span></div>`;
	return `<tr class="${last ? "last" : ""} ${raw === "阶梯孔1" ? "selected" : ""}">
		<td>${node}</td><td class="en">P2</td><td>${author || "龙勇"}</td><td>${reviewer === "-" ? "" : reviewer || "龙勇"}</td><td>${state || "已上网"}</td>
	</tr>`;
}).join("");
```
